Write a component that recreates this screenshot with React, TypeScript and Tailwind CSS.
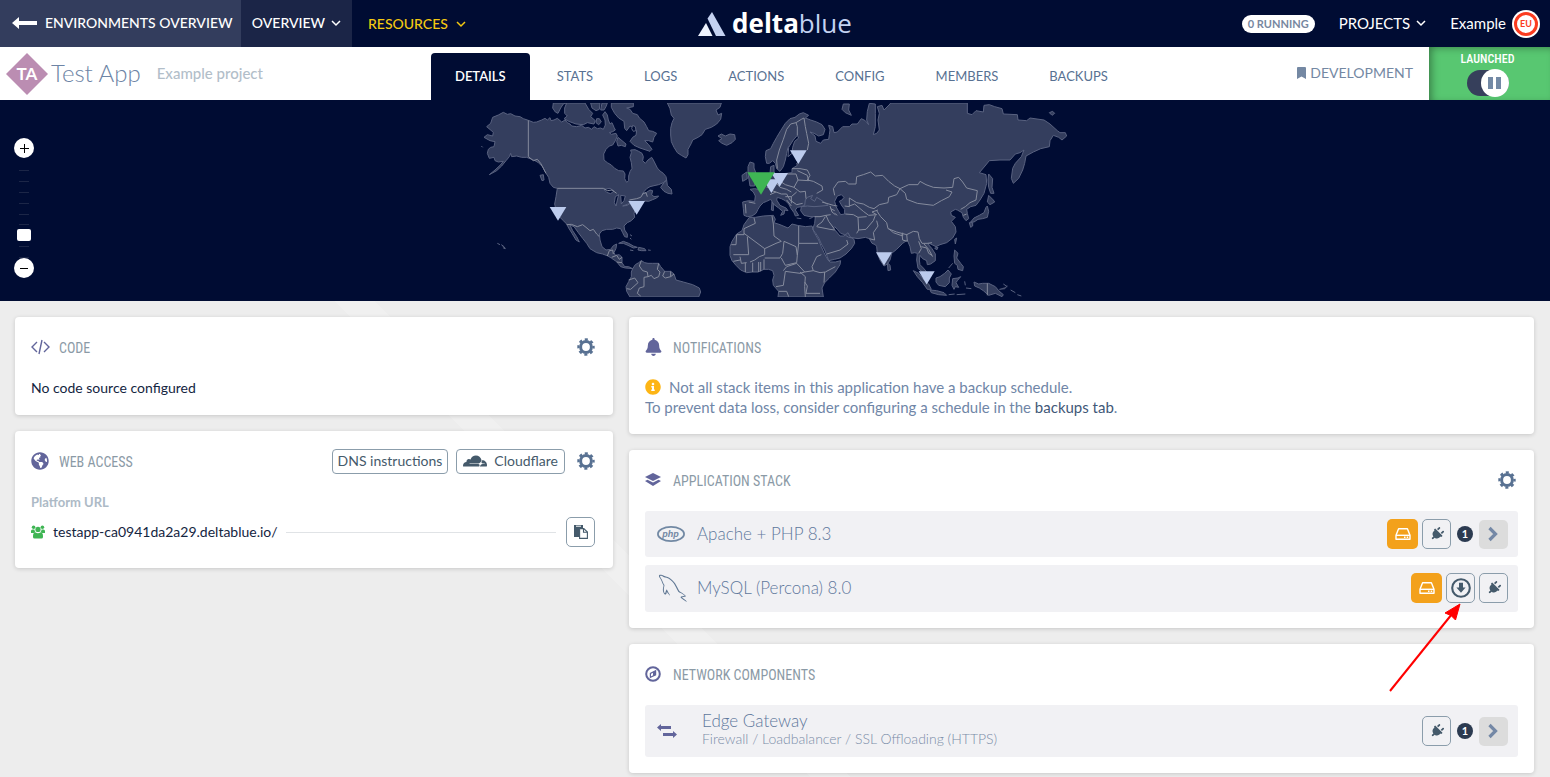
import { useState } from "react";
import type { ReactNode } from "react";
import { FaBell, FaBookmark, FaGlobeAmericas, FaInfoCircle, FaPlug } from "react-icons/fa";
import { SiCloudflare } from "react-icons/si";
import { DiMysql } from "react-icons/di";

/* ── Icons ── */

function ChevronDown() {
  return (
    <svg className="w-2.5 h-2.5" viewBox="0 0 10 10" fill="none" stroke="currentColor" strokeWidth={1.5}>
      <path d="M1 3l4 4 4-4" />
    </svg>
  );
}

function GearIcon() {
  return (
    <svg className="w-[18px] h-[18px]" viewBox="0 0 18 18" fill="none" stroke="currentColor">
      <circle cx="9" cy="9" r="5.4" strokeWidth={3} />
      <circle cx="9" cy="9" r="7.6" strokeWidth={2.2} strokeDasharray="3.1 2.87" strokeDashoffset="1.5" />
    </svg>
  );
}

function CodeIcon() {
  return (
    <svg className="w-[19px] h-4" viewBox="0 0 19 16" fill="none" stroke="currentColor" strokeWidth={1.4}>
      <path d="M6 3L1 8l5 5M13 3l5 5-5 5M11 1L8 15" />
    </svg>
  );
}

function LayersIcon() {
  return (
    <svg className="w-4 h-3.5" viewBox="0 0 16 14" fill="currentColor">
      <path d="M8 0l8 4-8 4-8-4z" />
      <path d="M0 8l2.5-1.3L8 9.6l5.5-2.9L16 8l-8 5z" />
    </svg>
  );
}

function CompassIcon() {
  return (
    <svg className="w-4 h-4" viewBox="0 0 16 16" fill="none" stroke="currentColor">
      <circle cx="8" cy="8" r="6.8" strokeWidth={2} />
      <path d="M10.600 4.700v4.100l-5.200 2.600V7.400z" strokeWidth={1.2} />
      <path d="M8 6.3L10.600 5v4L8 10z" fill="currentColor" stroke="none" />
    </svg>
  );
}

function UsersIcon() {
  return (
    <svg className="w-3.5 h-3.5" viewBox="0 0 14 14" fill="currentColor">
      <circle cx="2.6" cy="2.2" r="1.8" />
      <circle cx="11.4" cy="2.2" r="1.8" />
      <circle cx="7" cy="4.4" r="2.6" />
      <path d="M0 8V6q0-1.6 1.6-1.6h1.8Q3.600 6.600 4.800 7.300L3 8zM14 8V6q0-1.600-1.600-1.600h-1.800q-.2 2.200-1.400 2.900L11 8z" />
      <path d="M2 11q0-3.400 2.600-3.400Q7 9 9.400 7.600 12 7.600 12 11v1q0 1.600-1.600 1.600H3.600Q2 13.600 2 12z" />
    </svg>
  );
}

function PasteIcon() {
  return (
    <svg className="w-3.5 h-3.5" viewBox="0 0 14 14" fill="currentColor">
      <path d="M0 0h9v3H6v9H0z" />
      <path d="M2 1.200h5" stroke="#fff" />
      <path d="M5.600 3.600h4.200L13.400 7v6.400H5.600z" fill="#fff" stroke="currentColor" strokeWidth={1.100} />
      <path d="M9.500 3.600V7.300h3.900" fill="none" stroke="currentColor" strokeWidth={1.100} />
    </svg>
  );
}

function DriveIcon() {
  return (
    <svg className="w-4 h-4" viewBox="0 0 16 16" fill="none" stroke="currentColor" strokeWidth={1.400}>
      <path d="M1 9.300L3.600 2.700h8.800L15 9.300v4H1z" strokeLinejoin="round" />
      <path d="M1 9.300h14" />
      <path d="M9 11.300h1.500M11.700 11.300h1.500" />
    </svg>
  );
}

function DownloadIcon() {
  return (
    <svg className="w-5 h-5" viewBox="0 0 20 20" fill="none" stroke="currentColor">
      <circle cx="10" cy="10" r="8.800" strokeWidth={2.100} />
      <path d="M8 4.800h4v4.600h2.600L10 14.800 5.400 9.400H8z" fill="currentColor" stroke="none" />
    </svg>
  );
}

function ChevronRight() {
  return (
    <svg className="w-3.5 h-4" viewBox="0 0 14 16" fill="none" stroke="currentColor" strokeWidth={3.200}>
      <path d="M2.500 2l6 6-6 6" />
    </svg>
  );
}

function PhpIcon() {
  return (
    <svg className="w-7 h-4" viewBox="0 0 28 16">
      <ellipse cx="14" cy="8" rx="13.100" ry="7.100" fill="#f1f2f4" stroke="currentColor" strokeWidth={1.700} />
      <text
        x="13.500"
        y="10.500"
        textAnchor="middle"
        fill="currentColor"
        className="text-[9px] font-bold italic font-['Liberation_Sans',sans-serif]"
      >
        php
      </text>
    </svg>
  );
}

function SwapIcon() {
  return (
    <svg className="w-5 h-3.5" viewBox="0 0 20 14" fill="currentColor">
      <path d="M0 3.500L4 0v2h10v3H4v2zM20 10.500L16 14v-2H6V9h10V7z" />
    </svg>
  );
}

/* ── World map ── */

const LAND_WEST = [
  "M100 37L112 43 122 41 135 48 150 50 160 56 175 61 190 67 200 66 215 60 225 55 232 60 240 53 243 62 252 60 262 55 275 66 285 60 292 68 300 72 305 78 320 80 335 76 345 84 355 82 365 88 372 80 382 86 392 84 400 88 406 75 405 60 398 45 405 35 412 45 415 60 420 72 426 68 432 82 436 90 428 95 418 98 424 103 438 100 442 108 436 122 428 135 418 138 408 148 401 162 402 180 412 188 424 195 434 205 446 212 460 213 465 222 464 236 470 247 476 242 476 228 480 215 486 205 484 188 480 172 484 158 482 150 495 149 506 154 516 160 520 170 518 182 526 190 534 180 545 172 550 180 556 192 562 204 570 213 580 220 588 230 590 240 580 248 566 254 552 257 540 260 530 266 522 275 516 283 528 278 540 270 548 272 545 284 552 290 566 288 560 294 548 299 536 304 524 303 508 312 498 325 492 340 494 352 484 362 472 368 462 378 464 390 472 402 472 412 464 410 458 398 452 386 440 384 428 388 410 388 396 392 388 402 390 420 396 440 408 450 422 448 430 437 440 432 438 445 432 458 436 466 448 464 456 472 456 488 464 500 476 500 488 506 480 505 466 504 452 500 440 485 425 475 414 468 398 462 380 458 360 446 350 430 338 415 325 398 312 380 300 375 308 392 320 410 328 426 318 420 306 400 296 384 290 372 280 362 268 350 258 330 254 312 258 290 262 265 250 262 240 250 236 232 225 215 218 200 205 188 195 182 185 178 170 172 155 172 140 168 125 170 122 160 118 170 108 182 95 198 80 212 58 224 75 210 90 196 100 184 85 186 75 182 72 172 58 175 52 160 55 148 62 142 72 140 75 125 60 122 42 112 52 104 68 108 70 97 50 80 62 70 68 52 85 45Z",
  "M250 9L248 24 256 36 264 40 272 24 280 12 288 9Z",
  "M290 9L284 24 284 40 292 48 282 56 296 64 318 72 340 74 352 68 372 72 376 62 362 50 368 40 356 28 345 9Z",
  "M362 9L366 24 378 32 388 28 390 9Z",
  "M396 9L392 30 402 30 408 20 412 9Z",
  "M380 56L388 56 394 66 386 74 378 68Z",
  "M424 9L424 22 434 40 446 54 462 64 464 85 470 92 480 78 490 82 500 92 498 106 488 112 480 124 492 136 510 144 528 150 540 154 546 148 536 134 524 122 536 122 548 126 552 112 560 100 548 94 536 92 530 80 522 66 508 54 502 44 488 40 480 28 470 24 490 20 490 9Z",
  "M444 112L456 122 468 132 466 140 454 136 444 138 440 124Z",
  "M592 9L600 26 604 45 612 55 606 68 602 85 602 105 604 125 612 142 622 158 634 166 648 174 654 164 654 148 664 130 668 120 684 112 696 104 706 88 724 82 740 72 752 58 755 40 744 45 738 30 750 22 754 9Z",
  "M744 108L754 102 766 108 780 102 794 104 796 118 786 128 770 136 756 130 746 122 756 116Z",
  "M572 262L582 248 590 240 592 256 604 268 606 282 594 280 582 274Z",
  "M210 226L220 224 222 240 216 242Z",
  "M82 430L90 434M94 434L102 440 106 446 100 444M480 404L486 408M484 418L480 414M34 138L38 142",
  "M446 430L460 424 476 430 490 438 502 442 490 444 474 436 460 430Z",
  "M506 442L524 446 528 452 514 452 504 450ZM480 450L490 452M534 450L542 451",
  "M488 506L496 494 506 488 514 482 524 488 534 490 548 490 566 490 572 500 584 514 602 514 612 522 618 540 640 546 668 554 688 564 692 576 686 591 480 591 470 574 468 560 476 545 484 530 484 516Z",
];

const WATER_WEST =
  "M402 268L420 265 432 273 422 281 410 277ZM436 290L446 284 442 300 438 318 433 308ZM452 286L466 288 462 302 454 312ZM458 318L480 310 472 316ZM488 76L496 80 498 92 490 94 485 86Z";

const BORDERS_WEST =
  "M175 61V170L190 182 202 178 212 190 220 205 228 220M262 265H400L412 272 426 270 440 280M478 300L500 296 512 292 520 280 528 278 532 290M290 374L304 373 322 380 338 374 348 382 360 392 370 388 380 402 388 410M412 468L418 452 428 450 430 462M425 472L440 466 448 478 456 472M440 486L456 488M514 482L508 498 518 512 532 516 534 530 522 532 522 560 508 564 502 580 512 588M566 490L562 508 570 516 566 530 552 536 544 526 534 530M584 514L578 528 586 534 602 530 612 522M602 514V530M476 540L494 534 504 548 482 568 470 566";

const LAND_EAST = [
  "M140 190L136 170 138 152 152 146 160 130 170 112 182 92 196 70 210 56 225 52 238 42 250 38 266 46 256 54 272 60 290 66 306 74 315 88 310 104 296 108 282 100 270 96 285 108 288 124 302 130 310 120 326 118 328 104 330 90 326 76 338 80 342 98 352 96 368 80 388 80 396 72 412 72 424 56 436 62 446 74 440 60 442 34 448 10 466 12 466 40 466 80 460 104 470 100 478 90 474 60 478 40 472 20 486 16 492 30 510 12 512 9 742 9 742 40 756 44 768 32 790 36 792 16 808 14 824 20 846 26 850 42 892 44 894 60 920 62 930 54 972 60 990 72 1012 92 1020 98 1036 98 1040 108 1026 120 1016 112 1000 106 990 122 988 140 962 146 940 156 918 168 914 190 908 210 896 235 880 250 874 235 878 205 886 190 904 170 912 150 900 158 886 162 870 180 840 180 808 182 795 198 778 218 798 224 800 250 792 280 780 300 768 316 752 320 740 328 742 340 746 356 738 362 730 352 726 338 712 330 706 328 692 336 694 346 706 352 694 364 706 380 708 396 698 414 680 428 660 434 648 440 632 432 622 430 636 446 646 462 646 482 632 492 622 494 620 482 608 476 600 466 598 480 600 494 610 504 622 518 626 540 612 520 594 505 590 480 592 460 584 458 574 460 570 440 562 420 548 430 530 448 515 460 510 480 502 492 492 498 480 480 472 460 470 440 466 434 456 430 448 416 436 412 414 416 402 414 386 412 374 404 362 400 352 388 344 380 340 385 350 396 360 408 372 408 384 398 390 410 402 418 404 430 394 446 378 462 360 474 344 478 326 482 322 470 314 450 304 432 296 414 286 398 278 388 284 370 286 350 270 350 252 346 242 332 244 320 254 316 256 300 262 292 278 286 272 296 284 304 290 292 300 298 318 310 324 316 306 318 282 320 262 318 244 320 232 322 226 330 236 346 226 348 222 338 212 324 206 312 196 302 184 296 172 292 170 300 180 316 198 324 204 332 194 330 192 342 182 346 188 334 176 324 160 312 152 298 140 304 130 308 120 318 114 328 108 340 96 348 82 350 72 346 70 326 68 306 86 302 104 304 106 288 100 276 90 268 104 266 116 268 128 252 140 248 148 236 150 220 152 200 162 196 162 214 166 224 180 222 200 220 216 218 216 206 232 196 230 190 236 184 230 182 218 150 208 140 204 142 200 160 196 180 190 200 180 214 170 206 166 190 158 182 148 190Z",
  "M806 222L818 236 816 262 822 280 812 280 806 262 804 240Z",
  "M806 286L820 300 824 306 810 314 802 306Z",
  "M802 318L806 334 802 352 788 356 774 358 762 366 752 366 762 354 778 346 792 338 798 322Z",
  "M748 368L758 368 758 378 752 382Z",
  "M704 418L710 414 706 432Z",
  "M644 444L654 442 650 450Z",
  "M502 488L510 496 512 510 504 512Z",
  "M704 450L714 460 710 474 722 490 730 500 728 512 714 508 712 496 704 490 702 468Z",
  "M686 504L698 490",
  "M648 534L660 530 674 520 684 510 694 522 688 534 688 548 676 560 656 556 648 546Z",
  "M580 512L596 520 612 540 626 552 634 568 622 568 608 548 592 530Z",
  "M630 570L650 572 672 578 680 586 656 584 634 578Z",
  "M686 584L704 582M710 584L736 582M734 544L736 556M738 564L754 566",
  "M698 536L714 534 722 530 712 542 708 548 716 562 706 560 702 568 696 556Z",
  "M762 546L776 552 788 550 806 550 826 560 836 572 850 584 846 590 826 580 806 586 790 572 778 564 764 558Z",
  "M838 568L854 566 862 558M850 552L862 560M872 570L886 578M892 584L904 588",
  "M90 186L102 190 102 204 108 220 104 258 90 258 84 220 84 200Z",
  "M66 226L80 216 82 236 68 244Z",
  "M370 12L388 12 386 30 394 46 376 38 366 28Z",
  "M988 38L998 34 1004 40 996 46Z",
  "M156 306L160 312 160 332 154 330ZM230 354L244 356M268 356L278 352",
  "M88 352L106 352 130 348 160 346 166 358 162 368 180 374 204 384 216 372 232 376 256 380 276 378 282 396 296 420 304 440 312 458 324 480 330 486 346 486 362 482 360 494 346 516 328 534 314 548 306 564 310 591 174 591 176 574 160 556 158 540 162 526 158 512 146 508 132 508 114 516 96 516 80 518 62 510 48 496 36 482 30 466 30 440 36 424 50 402 66 392 72 374Z",
];

const WATER_EAST =
  "M352 288L364 284 372 292 366 300 358 304 366 318 374 328 374 342 362 344 356 334 348 320 344 304ZM232 106L220 120 206 142 204 170 216 160 218 142 224 124 236 114Z";

const BORDERS_EAST =
  "M102 354L106 370 72 386 72 404 50 404M72 400L134 446 168 430 184 424 162 408 160 372 156 348M236 378V430H294M236 430L232 466 228 440 192 424M50 404L48 434 34 434M82 410L86 464H40M134 446V464L118 470 104 480 90 486M192 424L188 460 180 474 134 474M184 474L196 496 230 488 232 466M190 512L200 500 230 490 254 516 240 520 210 516 196 514M276 500L290 470 304 464M280 512L254 516M280 512L300 518 316 516 346 500M276 500L280 512M254 546L262 558 258 580H300M196 514L190 556 168 560M240 516L256 530 254 560 256 591M176 574L200 574 206 590M60 470L64 490 80 488M76 488V516M98 488V516M116 486V516M122 486V514M132 478V508M314 516L312 548M40 484L60 480" +
  "M172 206L170 180 178 150 190 118 200 88 212 72 228 68 232 80 232 106M228 68L244 58 252 54 256 80 260 100 266 130 262 150M344 286L340 266 354 246 376 244 386 252 408 252 410 230 430 224 452 216 466 228 488 226 506 244 524 258 540 266 566 254 594 254 600 244 618 254 640 262 672 264 698 262 702 236 716 232 728 246 740 264 772 272 768 300 750 308 736 320 722 328M540 266L556 280 560 298 592 310 640 316 664 302 688 290 696 276 678 270M540 266L530 284 506 292 504 308 478 314 462 326 448 322 430 312 410 308 388 294 388 320 374 318M388 318L404 312 430 334 446 346 470 344 456 336 474 330M470 332L482 350 500 368 504 386 530 396 560 404 580 394 594 396 598 416 606 430 622 430 636 428M506 386L520 398 548 408 548 398M546 402L548 420 562 424 560 402M596 424L604 446 596 460M604 440L620 444 626 460 636 466M612 432L626 448 638 470M414 352L416 390 410 400M416 390L438 388 460 362 466 346M470 362L474 378 460 398 464 420 448 416M344 340L352 346M376 342L400 344 414 352 440 350M318 346L326 364 344 388M284 350L300 350 318 346 332 344M290 378L306 366 316 350M290 380L330 388 344 390M320 462L360 450 384 432 380 420M330 318L336 336 346 344M306 306L340 316 352 318M332 326L344 332M802 550V586M730 346L740 342" +
  "M216 206L240 206 262 210 270 226 262 240 280 244 306 258 308 270 290 280M196 222L228 222 234 240 266 242M234 240L222 262 196 254 184 246M222 262L240 276 256 274 258 296M230 276L214 290 214 310M170 250L180 262 200 268 214 276M184 282L200 282 210 300 230 314 248 310M150 270L168 276 184 282M150 284L168 276M86 306L106 310M76 312L78 340M200 300L214 318M214 290L196 290M266 242L262 226 232 212M140 262L156 260";

// marker positions in map units, s is the width of the triangle
const MARKERS = [
  { id: "us-west", x: 264, y: 321, s: 50 },
  { id: "us-east", x: 500, y: 303, s: 50 },
  { id: "helsinki", x: 985, y: 151, s: 50 },
  { id: "frankfurt", x: 929, y: 219, s: 50 },
  { id: "paris", x: 904, y: 238, s: 50 },
  { id: "bangalore", x: 1242, y: 457, s: 48 },
  { id: "singapore", x: 1370, y: 514, s: 48 },
  { id: "london", x: 873, y: 217, s: 82, active: true },
];

function WorldMap() {
  return (
    <svg className="w-[610px] h-[194px]" viewBox="0 9 1830 582" role="img" aria-label="Data center locations">
      <g fill="#343e5e" stroke="#596280" strokeWidth={3} strokeLinejoin="round">
        <path d={LAND_WEST.join("")} />
        <path d={WATER_WEST} fill="#000c33" />
        <path d={BORDERS_WEST} fill="none" stroke="#858b9d" />
        <g transform="translate(750 0)">
          <path d={LAND_EAST.join("")} />
          <path d={WATER_EAST} fill="#000c33" />
          <path d={BORDERS_EAST} fill="none" stroke="#858b9d" />
        </g>
      </g>
      {MARKERS.map((m) => (
        <path
          key={m.id}
          d={`M${m.x - m.s / 2} ${m.y}h${m.s}L${m.x} ${m.y + m.s * 0.82}z`}
          fill={m.active ? "#3fb554" : "#bccbed"}
        />
      ))}
    </svg>
  );
}

function ZoomControl() {
  const [zoom, setZoom] = useState(2);
  const step = (n: number) => setZoom((z) => Math.min(8, Math.max(0, z + n)));

  return (
    <div className="absolute left-3.5 top-[38px] flex flex-col items-center w-5">
      <button
        onClick={() => step(1)}
        aria-label="Zoom in"
        className="w-5 h-5 rounded-full bg-white text-black flex items-center justify-center"
      >
        <svg className="w-2.5 h-2.5" viewBox="0 0 10 10" stroke="currentColor"><path d="M1 5.500h9M5.500 1v9" /></svg>
      </button>
      <div className="relative w-5 h-[100px]">
        <div className="absolute inset-x-0 top-3 bottom-0 flex flex-col justify-between items-center">
          {Array.from({ length: 9 }).map((_, i) => (
            <span key={i} className="w-2.5 h-px bg-[#1c2647]" />
          ))}
        </div>
        <input
          type="range"
          min={0}
          max={8}
          value={zoom}
          onChange={(e) => setZoom(Number(e.target.value))}
          aria-label="Zoom level"
          className="absolute inset-x-0 top-1.5 w-5 h-[98px] appearance-none bg-transparent [writing-mode:vertical-lr] [direction:rtl] [&::-webkit-slider-thumb]:appearance-none [&::-webkit-slider-thumb]:w-3.5 [&::-webkit-slider-thumb]:h-3 [&::-webkit-slider-thumb]:rounded-xs [&::-webkit-slider-thumb]:bg-white"
        />
      </div>
      <button
        onClick={() => step(-1)}
        aria-label="Zoom out"
        className="relative w-5 h-5 rounded-full bg-white text-black flex items-center justify-center"
      >
        <svg className="w-2.5 h-2.5" viewBox="0 0 10 10" stroke="currentColor"><path d="M1 5.500h8" /></svg>
      </button>
    </div>
  );
}

/* ── Building blocks ── */

function Card({ icon, title, actions, children }: {
  icon: ReactNode;
  title: string;
  actions?: ReactNode;
  children: ReactNode;
}) {
  return (
    <section className="bg-white rounded-sm shadow-[0_1px_4px_rgba(0,0,0,0.16)] px-4 pt-[15px] pb-4">
      <div className="flex items-center h-[30px]">
        <span className="w-7 shrink-0 text-[#62659b]">{icon}</span>
        <h2 className="pt-px text-[14px] leading-5 text-[#8b9aa6] font-['Liberation_Sans_Narrow','Roboto_Condensed',Roboto,sans-serif]">
          {title}
        </h2>
        <div className="ml-auto flex items-center gap-2">{actions}</div>
      </div>
      {children}
    </section>
  );
}

function SettingsButton({ label }: { label: string }) {
  return (
    <button aria-label={label} className="mr-0.5 ml-1 text-[#587192]">
      <GearIcon />
    </button>
  );
}

function IconButton({ label, children }: { label: string; children: ReactNode }) {
  return (
    <button
      aria-label={label}
      className="w-[29px] h-[30px] shrink-0 rounded-[5px] border border-[#8b9dab] text-[#455a6b] flex items-center justify-center"
    >
      {children}
    </button>
  );
}

function StorageButton() {
  return (
    <button
      aria-label="Storage"
      className="w-[31px] h-[30px] rounded-[5px] bg-[#f3a11b] text-white flex items-center justify-center"
    >
      <DriveIcon />
    </button>
  );
}

function PlugButton() {
  return (
    <IconButton label="Connections">
      <FaPlug className="w-3.5 h-3.5 rotate-45" />
    </IconButton>
  );
}

function CountAndOpen() {
  return (
    <div className="flex items-center gap-1.5 ml-0.5">
      <span className="w-4 h-4 rounded-full bg-[#2b3a50] text-white text-[11px] leading-4 font-bold text-center">1</span>
      <button
        aria-label="Open"
        className="w-[29px] h-[29px] rounded-[5px] bg-[#dcdcdc] text-[#7488a6] flex items-center justify-center"
      >
        <ChevronRight />
      </button>
    </div>
  );
}

// callout pointing at the backup download button
function Arrow() {
  return (
    <svg className="absolute z-10 top-full -left-16 w-[84px] h-[92px] pointer-events-none" viewBox="0 0 84 92">
      <path d="M8 88L70 11" stroke="#f00" strokeWidth={2} />
      <path d="M78 1L73.500 17 69 12.500 63 10z" fill="#f00" stroke="#f00" />
    </svg>
  );
}

const TABS = ["DETAILS", "STATS", "LOGS", "ACTIONS", "CONFIG", "MEMBERS", "BACKUPS"];

export default function App() {
  const [tab, setTab] = useState("DETAILS");

  return (
    <div className="min-h-screen bg-[#ededed] font-[Lato,sans-serif] text-[14px] leading-5 text-[#14253f]">
      {/* Top bar */}
      <header className="grid grid-cols-[1fr_auto_1fr] h-[47px] bg-[#000c33] text-white">
        <nav className="flex">
          <a href="#environments" className="flex items-center gap-2 pl-3 w-[241px] pb-0.5 bg-[#333d5d]">
            <svg className="w-[25px] h-3" viewBox="0 0 25 12" fill="currentColor">
              <path d="M0 6l7-6v4h18v4H7v4z" />
            </svg>
            <span className="font-medium">ENVIRONMENTS OVERVIEW</span>
          </a>
          <button className="flex items-center justify-center gap-1.5 w-[111px] pb-0.5 bg-[#1b2547] font-medium">
            OVERVIEW <ChevronDown />
          </button>
          <button className="flex items-center gap-2 pl-4 text-[#f3c911] font-medium">
            RESOURCES <ChevronDown />
          </button>
        </nav>

        <a href="#home" className="flex items-center gap-1.5">
          <svg className="w-7 h-6" viewBox="0 0 28 24">
            <path d="M0 24L8 11l6.500 13z" fill="#eef3fe" />
            <path d="M9.500 6.500L14 0l13.500 24h-9.500z" fill="#c4d2f1" />
          </svg>
          <span className="pb-0.5 text-[26px] leading-8 font-['Open_Sans',sans-serif] text-[#c4d2f1]">
            <b className="text-white">delta</b>blue
          </span>
        </a>

        <div className="flex items-center justify-end pr-2.5">
          <span className="h-[18px] px-1.5 rounded-[9px] bg-white text-[#77879f] text-[11px] leading-[18px] font-bold">
            0 RUNNING
          </span>
          <button className="ml-6 flex items-center gap-1.5 pb-0.5 text-[15px]">
            PROJECTS <ChevronDown />
          </button>
          <button className="ml-6 flex items-center gap-1.5">
            <span className="pb-0.5 text-[15px]">Example</span>
            <span className="w-7 h-7 rounded-full bg-white p-0.5">
              <span className="w-6 h-6 rounded-full border-[3px] border-[#fb3c20] text-[#fb3c20] text-[9px] font-bold flex items-center justify-center">
                EU
              </span>
            </span>
          </button>
        </div>
      </header>

      {/* App bar */}
      <div className="flex h-[53px] bg-white">
        <div className="w-[431px] shrink-0 flex items-center pl-1.5">
          <svg className="w-[42px] h-[42px]" viewBox="0 0 42 42">
            <path d="M21 0l21 21-21 21L0 21z" fill="#bb8db2" />
            <text x="21" y="27" textAnchor="middle" fill="#fff" className="text-[17px] font-bold">TA</text>
          </svg>
          <h1 className="ml-[3px] pb-0.5 text-[24px] leading-8 font-light text-[#6d84a5]">Test App</h1>
          <span className="ml-4 pb-0.5 text-[15px] font-medium text-[#b2bec9]">Example project</span>
        </div>
        <nav className="flex gap-[3px] pt-1.5">
          {TABS.map((name) => (
            <button
              key={name}
              onClick={() => setTab(name)}
              className={`px-6 pb-px rounded-t-[4px] text-[13px] ${
                name === tab ? "bg-[#000c33] text-white font-semibold" : "text-[#587192]"
              }`}
            >
              {name}
            </button>
          ))}
        </nav>
        <div className="ml-auto flex items-center gap-[3px] pr-4 pb-0.5 text-[#7488a3]">
          <FaBookmark className="w-[11px] h-3" />
          DEVELOPMENT
        </div>
        <div className="w-[121px] pr-1 bg-[#58c771] shadow-[inset_4px_2px_8px_-2px_rgba(0,0,0,0.4)] flex flex-col items-center pt-0.5">
          <span className="text-[12px] text-white font-medium font-['Roboto_Condensed',Roboto,sans-serif]">LAUNCHED</span>
          <button role="switch" aria-checked="true" aria-label="Launched" className="w-[42px] h-7 flex items-center">
            <span className="w-full h-[26px] rounded-full bg-[#363f5b] flex items-center justify-end">
              <span className="w-7 h-7 shrink-0 rounded-full bg-white flex items-center justify-center gap-[3px]">
                <span className="w-[5px] h-3 bg-[#7389a5]" />
                <span className="w-[5px] h-3 bg-[#7389a5]" />
              </span>
            </span>
          </button>
        </div>
      </div>

      {/* Map */}
      <div className="relative h-[201px] pb-0.5 bg-[#000c33] flex items-center justify-center">
        <ZoomControl />
        <WorldMap />
      </div>

      <main className="bg-[linear-gradient(45deg,transparent_40%,#f0f0f0_40%,#f0f0f0_42%,transparent_42%)] grid grid-cols-[598fr_905fr] items-start gap-4 pt-4 pb-1 pl-[15px] pr-4">
        <div className="flex flex-col gap-4">
          <Card icon={<CodeIcon />} title="CODE" actions={<SettingsButton label="Code settings" />}>
            <p className="mt-4 pb-px">No code source configured</p>
          </Card>

          <Card
            icon={<FaGlobeAmericas className="w-[18px] h-[18px]" />}
            title="WEB ACCESS"
            actions={
              <>
                <button className="h-[25px] px-[5px] rounded-sm border border-[#8b9dab] text-[#455a6b]">
                  DNS instructions
                </button>
                <button className="h-[25px] px-1.5 rounded-sm border border-[#8b9dab] text-[#455a6b] flex items-center gap-[7px]">
                  <SiCloudflare className="w-6 h-6" />
                  Cloudflare
                </button>
                <SettingsButton label="Web access settings" />
              </>
            }
          >
            <p className="mt-4 text-[13px] font-bold text-[#adbac6]">Platform URL</p>
            <div className="flex items-center h-10 gap-2">
              <span className="text-[#3fb554]"><UsersIcon /></span>
              <a href="#testapp">testapp-ca0941da2a29.deltablue.io/</a>
              <span className="flex-1 h-px bg-[#e0e3e6]" />
              <span className="mx-0.5">
                <IconButton label="Copy URL"><PasteIcon /></IconButton>
              </span>
            </div>
          </Card>
        </div>

        <div className="flex flex-col gap-4">
          <Card icon={<FaBell className="w-[17px] h-[18px]" />} title="NOTIFICATIONS">
            <div className="mt-[15px] pb-px text-[15px] text-[#7086a7]">
              <p className="flex items-center gap-2">
                <FaInfoCircle className="w-4 h-4 text-[#fdb515]" />
                Not all stack items in this application have a backup schedule.
              </p>
              <p>
                To prevent data loss, consider configuring a schedule in the{" "}
                <a href="#backups" className="text-[#3f5878]">backups tab</a>.
              </p>
            </div>
          </Card>

          <Card icon={<LayersIcon />} title="APPLICATION STACK" actions={<SettingsButton label="Stack settings" />}>
            <ul className="mt-4 flex flex-col gap-2 text-[17px] font-light text-[#5f789c]">
              <li className="flex items-center h-[46px] pl-3 pr-2.5 rounded-[3px] bg-[#f1f1f4]">
                <span className="w-10 text-[#7188a3]"><PhpIcon /></span>
                Apache + PHP 8.3
                <div className="ml-auto flex items-center gap-1">
                  <StorageButton />
                  <PlugButton />
                  <CountAndOpen />
                </div>
              </li>
              <li className="flex items-center h-[47px] pl-2 pr-2.5 pb-px rounded-[3px] bg-[#f1f1f4]">
                <span className="w-11 text-[#5f7793]"><DiMysql className="w-10 h-10" /></span>
                MySQL (Percona) 8.0
                <div className="ml-auto flex items-center gap-1">
                  <StorageButton />
                  <div className="relative">
                    <IconButton label="Download backup"><DownloadIcon /></IconButton>
                    <Arrow />
                  </div>
                  <PlugButton />
                </div>
              </li>
            </ul>
          </Card>

          <Card icon={<CompassIcon />} title="NETWORK COMPONENTS">
            <div className="mt-4 flex items-center h-[52px] pl-3 pr-2.5 rounded-[3px] bg-[#f1f1f4] font-light">
              <span className="w-[45px] text-[#62659b]"><SwapIcon /></span>
              <div className="pb-1">
                <p className="text-[17px] text-[#5f789c]">Edge Gateway</p>
                <p className="leading-4 text-[#7b8da8]">Firewall / Loadbalancer / SSL Offloading (HTTPS)</p>
              </div>
              <div className="ml-auto flex items-center gap-1">
                <PlugButton />
                <CountAndOpen />
              </div>
            </div>
          </Card>
        </div>
      </main>
    </div>
  );
}
